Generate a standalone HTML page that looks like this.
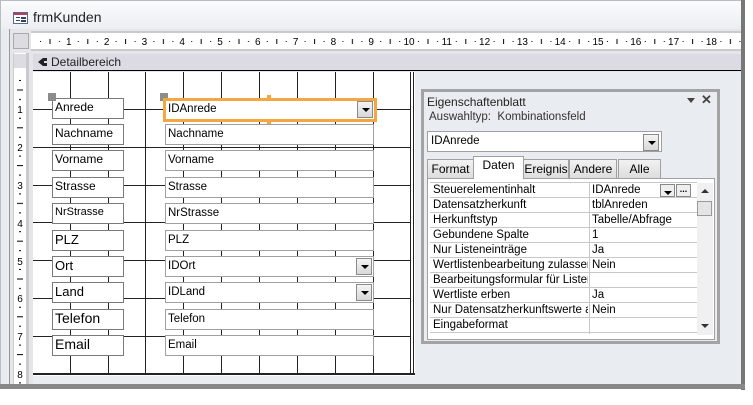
<!DOCTYPE html>
<html><head><meta charset="utf-8"><style>
*{box-sizing:border-box;margin:0;padding:0}
body{width:753px;height:405px;overflow:hidden;background:#fff;font-family:"Liberation Sans",sans-serif;position:relative}
.a{position:absolute}
.lbl{position:absolute;border:1px solid #7a7a7a;background:#fff;font-size:12px;padding:0 2px;line-height:17px;color:#000;left:52px;width:72px;height:21px}
.txt{position:absolute;border:1px solid #a0a0a0;background:#fff;font-size:11.5px;padding:1px 2px;line-height:17px;left:165px;width:209px;height:21px}
.dd{position:absolute;right:1px;top:1px;width:16px;height:17px;background:linear-gradient(#f4f4f4,#d8d8d8);border:1px solid #8a8a8a}
.dd:after{content:"";position:absolute;left:4px;top:6px;border-left:4px solid transparent;border-right:4px solid transparent;border-top:4px solid #000}
.row{position:absolute;left:0;width:267px;height:15px;border-bottom:1px solid #c8c8c8;font-size:11.5px;line-height:15px}
.row span{position:absolute;left:3px;white-space:nowrap;overflow:hidden;width:155px}
.row b{position:absolute;left:162px;font-weight:normal;white-space:nowrap}
.tab{position:absolute;top:159px;height:20px;border:1px solid #a0a0a0;border-bottom:none;background:linear-gradient(#f2f2f2,#dcdcdc);font-size:12px;text-align:center;line-height:18px}
</style></head><body>
<!-- window frame -->
<div class="a" style="left:0;top:0;width:742px;height:384px;background:#e8ebef;border:1px solid #b8bcc4;border-bottom:none"></div>
<div class="a" style="left:1px;top:1px;width:740px;height:28px;background:linear-gradient(#fbfbfc,#eceef2)"></div>
<svg class="a" style="left:13px;top:12px" width="15" height="12"><rect x=".5" y=".5" width="14" height="11" fill="#fff" stroke="#5b6b90"/><rect x="1" y="1" width="13" height="2" fill="#c03a5a"/><rect x="3" y="5" width="4" height="1" fill="#345"/><rect x="8" y="5" width="5" height="2" fill="#345"/><rect x="3" y="8" width="4" height="1" fill="#345"/><rect x="8" y="8" width="5" height="2" fill="#345"/></svg>
<div class="a" style="left:33px;top:9px;font-size:14px;color:#222">frmKunden</div>
<div class="a" style="left:9px;top:29px;width:733px;height:355px;background:#e6e6ea;border-left:1px solid #999"></div>
<!-- ruler -->
<div class="a" style="left:13px;top:33px;width:16px;height:16px;background:#dcdce2;border:1px solid #aaa"></div>
<div class="a" style="left:31px;top:31px;width:711px;height:20px;background:#fff;border-top:2px solid #c9c9d0;border-bottom:2px solid #c9c9d0"></div>
<svg class="a" style="left:31px;top:33px" width="711" height="16" font-family="Liberation Sans" font-size="10">
<defs><pattern id="p" x="0" width="37.8" height="16" patternUnits="userSpaceOnUse"><rect x="9" y="8" width="1" height="1" fill="#000"/><rect x="18.5" y="6" width="1" height="5" fill="#000"/><rect x="28" y="8" width="1" height="1" fill="#000"/></pattern></defs>
<rect x="0" y="0" width="711" height="16" fill="url(#p)"/>
<g text-anchor="middle"><text x="37.8" y="12">1</text><text x="75.6" y="12">2</text><text x="113.4" y="12">3</text><text x="151.2" y="12">4</text><text x="189" y="12">5</text><text x="226.8" y="12">6</text><text x="264.6" y="12">7</text><text x="302.4" y="12">8</text><text x="340.2" y="12">9</text><text x="378" y="12">10</text><text x="415.8" y="12">11</text><text x="453.6" y="12">12</text><text x="491.4" y="12">13</text><text x="529.2" y="12">14</text><text x="567" y="12">15</text><text x="604.8" y="12">16</text><text x="642.6" y="12">17</text><text x="680.4" y="12">18</text></g>
</svg>
<!-- vertical ruler -->
<div class="a" style="left:13px;top:53px;width:16px;height:332px;background:#fff;border-right:3px solid #c9c9d0;border-left:1px solid #ccc"></div>
<div class="a" style="left:14px;top:54px;width:12px;height:14px;background:#dcdce2"></div>
<svg class="a" style="left:14px;top:71px" width="12" height="314" font-family="Liberation Sans" font-size="10">
<defs><pattern id="q" y="0" width="12" height="37.8" patternUnits="userSpaceOnUse"><rect x="5" y="9" width="2" height="1" fill="#000"/><rect x="3" y="18.5" width="6" height="1" fill="#000"/><rect x="5" y="28" width="2" height="1" fill="#000"/></pattern></defs>
<rect width="12" height="314" fill="url(#q)"/>
<g text-anchor="middle"><rect x="2" y="33" width="8" height="10" fill="#fff"/><text x="6" y="42">1</text><rect x="2" y="71" width="8" height="10" fill="#fff"/><text x="6" y="80">2</text><rect x="2" y="109" width="8" height="10" fill="#fff"/><text x="6" y="118">3</text><rect x="2" y="147" width="8" height="10" fill="#fff"/><text x="6" y="156">4</text><rect x="2" y="185" width="8" height="10" fill="#fff"/><text x="6" y="194">5</text><rect x="2" y="222" width="8" height="10" fill="#fff"/><text x="6" y="231">6</text><rect x="2" y="260" width="8" height="10" fill="#fff"/><text x="6" y="269">7</text><rect x="2" y="298" width="8" height="10" fill="#fff"/><text x="6" y="307">8</text></g></svg>
<!-- detail bar -->
<div class="a" style="left:33px;top:54px;width:709px;height:17px;background:#dcdbe4;border-bottom:1px solid #000;font-size:12px;line-height:16px;padding-left:18px;color:#222">Detailbereich</div>
<svg class="a" style="left:38px;top:57px" width="10" height="10"><path d="M0 5L5 1H9V4H6V6H9V9H5Z" fill="#222"/></svg>
<div class="a" style="left:33px;top:72px;width:709px;height:312px;background:#e9ecf0"></div>
<!-- grid -->
<svg class="a" style="left:33px;top:72px" width="382" height="304">
<rect width="382" height="304" fill="#fff"/>
<g stroke="#222" stroke-width="1">
<path d="M37.5 0V302M75.5 0V302M112.5 0V302M150.5 0V302M188.5 0V302M226.5 0V302M264.5 0V302M302.5 0V302M340.5 0V302"/>
<path d="M0 37.5H378M0 75.5H378M0 113.5H378M0 150.5H378M0 188.5H378M0 226.5H378M0 264.5H378"/>
<path d="M377.5 0V303M380.5 0V303" /></g>
<rect x="0" y="301" width="382" height="2" fill="#222"/>
</svg>
<!-- labels -->
<div class="lbl" style="top:98px">Anrede</div>
<div class="lbl" style="top:124px">Nachname</div>
<div class="lbl" style="top:150px">Vorname</div>
<div class="lbl" style="top:177px">Strasse</div>
<div class="lbl" style="top:203px;font-size:11px">NrStrasse</div>
<div class="lbl" style="top:230px;font-size:13px">PLZ</div>
<div class="lbl" style="top:256px;font-size:13px">Ort</div>
<div class="lbl" style="top:282px;font-size:13px">Land</div>
<div class="lbl" style="top:309px;font-size:14px">Telefon</div>
<div class="lbl" style="top:335px;font-size:14px">Email</div>
<div class="a" style="left:48px;top:93px;width:8px;height:8px;background:#8c8c8c"></div>
<div class="a" style="left:160px;top:93px;width:8px;height:8px;background:#8c8c8c"></div>
<!-- text boxes -->
<div class="txt" style="top:98px;border:3px solid #f5a640;left:163px;width:214px;height:24px;line-height:15px">IDAnrede<div class="dd" style="top:0;right:1px"></div></div>
<div class="a" style="left:267px;top:95px;width:4px;height:3px;background:#f5a640"></div>
<div class="a" style="left:267px;top:121px;width:4px;height:3px;background:#f5a640"></div>
<div class="txt" style="top:124px">Nachname</div>
<div class="txt" style="top:150px">Vorname</div>
<div class="txt" style="top:177px">Strasse</div>
<div class="txt" style="top:203px">NrStrasse</div>
<div class="txt" style="top:230px">PLZ</div>
<div class="txt" style="top:256px">IDOrt<div class="dd"></div></div>
<div class="txt" style="top:282px">IDLand<div class="dd"></div></div>
<div class="txt" style="top:309px">Telefon</div>
<div class="txt" style="top:335px">Email</div>
<!-- property sheet -->
<div class="a" style="left:421px;top:89px;width:299px;height:255px;background:#e9ecf0;border:3px solid #a3a3a3"></div>
<div class="a" style="left:427px;top:95px;font-size:12px;color:#222">Eigenschaftenblatt</div>
<div class="a" style="left:687px;top:98px;border-left:4px solid transparent;border-right:4px solid transparent;border-top:5px solid #444"></div>
<div class="a" style="left:701px;top:92px;font-size:13px;font-weight:bold;color:#444">✕</div>
<div class="a" style="left:429px;top:111px;font-size:11.5px;color:#333">Auswahltyp:&nbsp; Kombinationsfeld</div>
<div class="a" style="left:427px;top:131px;width:235px;height:21px;background:#fff;border:1px solid #a0a0a0;font-size:11.5px;line-height:19px;padding-left:3px">IDAnrede<div class="dd" style="top:2px;right:2px"></div></div>
<div class="tab" style="left:427px;width:47px">Format</div>
<div class="tab" style="left:523px;width:46px">Ereignis</div>
<div class="tab" style="left:569px;width:48px">Andere</div>
<div class="tab" style="left:618px;width:43px">Alle</div>
<div class="tab" style="left:473px;top:156px;width:51px;height:23px;background:#fff;line-height:16px;z-index:2">Daten</div>
<div class="a" style="left:427px;top:178px;width:288px;height:162px;background:#fff;border:1px solid #a0a0a0"></div>
<div class="a" style="left:430px;top:182px;width:267px;height:152px;border-top:1px solid #c8c8c8;overflow:hidden">
<div class="a" style="left:159px;top:0;width:1px;height:152px;background:#c8c8c8"></div>
<div class="row" style="top:0"><span>Steuerelementinhalt</span><b>IDAnrede</b></div>
<div class="row" style="top:15px"><span>Datensatzherkunft</span><b>tblAnreden</b></div>
<div class="row" style="top:30px"><span>Herkunftstyp</span><b>Tabelle/Abfrage</b></div>
<div class="row" style="top:45px"><span>Gebundene Spalte</span><b>1</b></div>
<div class="row" style="top:60px"><span>Nur Listeneinträge</span><b>Ja</b></div>
<div class="row" style="top:75px"><span>Wertlistenbearbeitung zulassen</span><b>Nein</b></div>
<div class="row" style="top:90px"><span>Bearbeitungsformular für Listeneinträge</span><b></b></div>
<div class="row" style="top:105px"><span>Wertliste erben</span><b>Ja</b></div>
<div class="row" style="top:120px"><span>Nur Datensatzherkunftswerte anzeigen</span><b>Nein</b></div>
<div class="row" style="top:135px"><span>Eingabeformat</span><b></b></div>
</div>
<div class="a" style="left:660px;top:184px;width:15px;height:13px;border:1px solid #888;background:#eee"></div>
<div class="a" style="left:664px;top:191px;border-left:4px solid transparent;border-right:4px solid transparent;border-top:4px solid #000"></div>
<div class="a" style="left:676px;top:184px;width:15px;height:13px;border:1px solid #888;background:#eee;font-size:9px;line-height:8px;text-align:center;font-weight:bold">...</div>
<div class="a" style="left:697px;top:183px;width:16px;height:152px;background:#f0f0f0"></div>
<div class="a" style="left:701px;top:189px;border-left:4px solid transparent;border-right:4px solid transparent;border-bottom:4px solid #333"></div>
<div class="a" style="left:697px;top:201px;width:15px;height:15px;background:#e4e4e4;border:1px solid #999"></div>
<div class="a" style="left:701px;top:324px;border-left:4px solid transparent;border-right:4px solid transparent;border-top:4px solid #333"></div>
<!-- torn edge shadow -->
<div class="a" style="left:741px;top:0;width:4px;height:390px;background:#777"></div>
<div class="a" style="left:0;top:384px;width:745px;height:5px;background:#888"></div>
</body></html>
